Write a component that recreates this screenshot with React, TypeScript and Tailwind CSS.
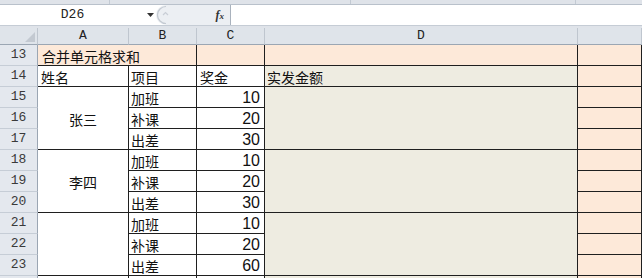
import React from "react";

const cjk = { fontFamily: '"Noto Sans CJK SC", "Liberation Sans", sans-serif' };
const num = { fontFamily: '"Liberation Sans", Arial, sans-serif' };
const head = { fontFamily: '"Liberation Mono", "Courier New", monospace' };

const rowHdr =
  "bg-[#e4e8ee] border-r border-b border-r-[#9ba6b3] border-b-[#c6cdd6] flex items-center justify-center text-[13px] text-[#3a3a3a]";
const colHdr =
  "bg-[#dfe4ea] border-r border-b border-r-[#bfc6cf] border-b-[#9ba6b3] flex items-center justify-center text-[13px] text-[#222]";
const cell = "border-r border-b border-[#1f1f1f] flex items-center text-[14px] text-[#111] leading-none pt-[2px]";

const groups = [
  { name: "张三", items: [["加班", "10"], ["补课", "20"], ["出差", "30"]] },
  { name: "李四", items: [["加班", "10"], ["补课", "20"], ["出差", "30"]] },
  { name: "", items: [["加班", "10"], ["补课", "20"], ["出差", "60"]] },
];

export default function App() {
  let rowNo = 15;
  return (
    <div className="w-[642px] h-[278px] overflow-hidden bg-white">
      {/* Formula bar */}
      <div className="h-[28px] flex flex-col bg-[#dfe3e9]">
        <div className="h-[5px] flex border-b border-[#b9c1cb]">
          <div className="w-[110px] border-r border-[#c3cad3]" />
          <div className="w-[241px] border-r border-[#c3cad3]" />
          <div className="w-[225px] border-r border-[#c3cad3]" />
        </div>
        <div className="h-[20px] flex bg-white">
          <div className="w-[145px] flex items-center justify-center text-[13px] text-[#222]" style={head}>
            D26
          </div>
          <div className="w-[11px] flex items-center justify-center">
            <svg width="7" height="4" viewBox="0 0 7 4">
              <path d="M0 0h7L3.5 4z" fill="#333" />
            </svg>
          </div>
          <div className="w-[74px] bg-[#eceff3] rounded-l-full flex items-center">
            <svg width="16" height="20" viewBox="0 0 16 20" className="ml-[1px]">
              <path d="M9 1.5A8.5 8.5 0 0 0 9 18.5" fill="none" stroke="#c4cad2" strokeWidth="1.2" />
              <path d="M6 10l2.5-2.5L11 10" fill="none" stroke="#c9ced6" strokeWidth="1.2" />
            </svg>
            <span className="ml-auto mr-[6px] text-[12px] italic font-bold text-[#333]" style={{ fontFamily: '"Liberation Serif", serif' }}>
              f<span className="text-[9px]">x</span>
            </span>
          </div>
          <div className="flex-1 border-l border-[#a9b2bd]" />
        </div>
        <div className="h-[3px] border-t border-[#c5ccd5]" />
      </div>

      {/* Sheet grid */}
      <div className="grid grid-cols-[38px_91px_68px_68px_313px_1fr] grid-rows-[17px_repeat(11,21px)_21px]">
        {/* column headers */}
        <div className={colHdr + " items-end justify-end pr-[2px] pb-[2px]"}>
          <svg width="10" height="10" viewBox="0 0 10 10">
            <path d="M10 0V10H0z" fill="#c3c9d1" />
          </svg>
        </div>
        {["A", "B", "C", "D", ""].map((c, i) => (
          <div key={i} className={colHdr} style={head}>
            {c}
          </div>
        ))}

        {/* row 13 */}
        <div className={rowHdr} style={head}>13</div>
        <div className={cell + " col-span-2 bg-[#fde9d9] pl-1"} style={cjk}>合并单元格求和</div>
        <div className={cell + " bg-[#fde9d9]"} />
        <div className={cell + " bg-[#fde9d9]"} />
        <div className={cell + " bg-[#fde9d9]"} />

        {/* row 14 */}
        <div className={rowHdr} style={head}>14</div>
        <div className={cell + " pl-[3px]"} style={cjk}>姓名</div>
        <div className={cell + " pl-[2px]"} style={cjk}>项目</div>
        <div className={cell + " pl-[3px]"} style={cjk}>奖金</div>
        <div className={cell + " bg-[#eeece1] pl-[2px]"} style={cjk}>实发金额</div>
        <div className={cell + " bg-[#fde9d9]"} />

        {/* data rows */}
        {groups.map((g, gi) =>
          g.items.map(([item, amount], ii) => {
            const n = rowNo++;
            return (
              <React.Fragment key={`${gi}-${ii}`}>
                <div className={rowHdr} style={head}>{n}</div>
                {ii === 0 && (
                  <div className={cell + " row-span-3 justify-center"} style={cjk}>
                    {g.name}
                  </div>
                )}
                <div className={cell + " pl-[2px]"} style={cjk}>{item}</div>
                <div className={cell + " justify-end pr-[4px] text-[16px]"} style={num}>{amount}</div>
                {ii === 0 && <div className={cell + " row-span-3 bg-[#eeece1]"} />}
                <div className={cell + " bg-[#fde9d9]"} />
              </React.Fragment>
            );
          })
        )}

        {/* row 24, cut off by the window edge */}
        <div className={rowHdr} />
        <div className={cell} />
        <div className={cell} />
        <div className={cell} />
        <div className={cell + " bg-[#eeece1]"} />
        <div className={cell + " bg-[#fde9d9]"} />
      </div>
    </div>
  );
}
